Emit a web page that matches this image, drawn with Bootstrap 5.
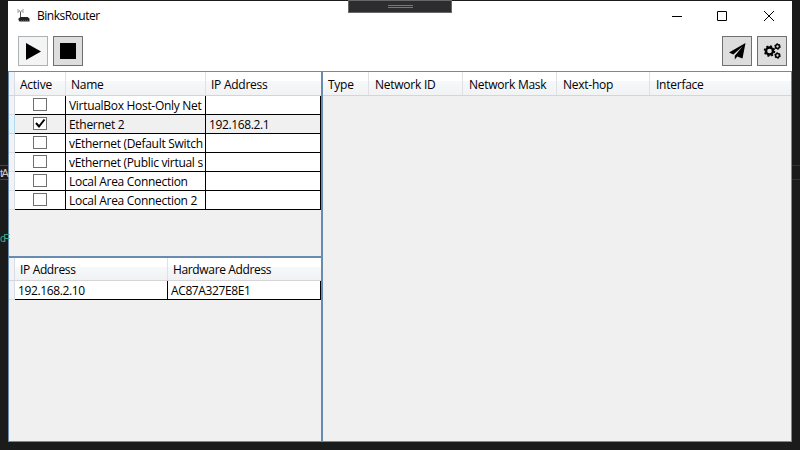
<!DOCTYPE html>
<html lang="en">
<head>
<meta charset="utf-8">
<title>BinksRouter</title>
<link href="https://cdn.jsdelivr.net/npm/bootstrap@5.3.0/dist/css/bootstrap.min.css" rel="stylesheet">
<style>
body{width:800px;height:450px;background:#1b1b1c;font-family:"Open Sans","Noto Sans",sans-serif;font-size:12px;line-height:18px;color:#000;letter-spacing:-.25px;padding:1px 8px 8px}
.win{width:784px;height:441px;background:#fff}
.titlebar{height:30px;padding:0 17px 0 9px}
.apptitle{margin-left:6px;letter-spacing:-.5px}
.tools{height:40px;padding:5px 5px 0 10px;gap:5px}
.tool{width:30px;height:30px;border:1px solid #707070;border-radius:0;background:#ddd;padding:0}
.tool.on{background:#f4f4f4;border-color:#adb2b5}
.panes{height:371px;border:1px solid #688caf}
.leftpane{width:312px}
.rightpane{border-left:2px solid #688caf}
.upper{height:184px}
.lower{border-top:2px solid #688caf}
.pane{background:#f0f0f0}
.heads{height:24px;background:linear-gradient(#fff 0%,#fff 40%,#f7f8fa 41%,#f1f2f4 100%);border-bottom:1px solid #d5d5d5}
.lower .heads{height:23px}
.hd{border-right:1px solid #dfe1e4;padding:4px 0 0 5px;white-space:nowrap}
.lower .hd{padding-top:3px;letter-spacing:-.35px}
.rightpane .hd{padding-left:6px}
.rightpane .hd:first-child{padding-left:5px}
.hd:last-child{border-right:0}
.edge{width:6px;background:#f0f4f9;border-right:1px solid #d9dde3}
.line{height:19px}
.line .edge{border-bottom:1px solid #dadfe5}
.line.sel .edge{background:#e4f3fb;border-color:#b3dbee}
.cell{background:#fff;border-right:1px solid #000;border-bottom:1px solid #000;padding:1px 0 0 3px;line-height:17px;letter-spacing:-.38px;overflow:hidden;white-space:nowrap}
.lower .cell{line-height:18px}
.clip{width:134px;overflow:hidden;letter-spacing:-.3px}
.sel .cell{background:#f0f0f0}
.w51{width:51px}.w140{width:140px}.w115{width:115px}.w153{width:153px}
.box{width:14px;height:13px;border:1px solid #707070;background:#fff;margin:2px 0 0 18px}
.grip{position:absolute;left:348px;top:0;width:104px;height:13px;background:#2d2d30;border:1px solid #686868}
.grip div{width:25px;height:3px;border:solid #77777a;border-width:1px 0;margin:4px auto 0}
.behind{position:absolute;left:0;width:8px;white-space:nowrap;font:11px/14px "Liberation Sans",sans-serif;letter-spacing:-1.5px}
.b1{top:165px;height:15px;color:#ccc;border:solid #454545;border-width:1px 0}
.b2{top:231px;color:#3fa78b;letter-spacing:-2.2px}
.b3{left:792px;top:165px;height:15px;border:solid #333;border-width:1px 0}
svg{display:block}
</style>
<script src="https://cdn.jsdelivr.net/npm/bootstrap@5.3.0/dist/js/bootstrap.bundle.min.js"></script>
</head>
<body class="m-0 overflow-hidden">
<div class="behind b1">tA</div><div class="behind b2">cF</div><div class="behind b3"></div>
<div class="win d-flex flex-column">
  <div class="titlebar d-flex align-items-center">
    <svg width="14" height="14" viewBox="0 0 14 14"><path d="M3.500 2.500v7" stroke="#555" fill="none"/><path d="M1 0v4M6 0v4M2.300 1v2M4.800 1v2" stroke="#888" stroke-width=".8"/><path d="M3.500 8h7l2 1.500v3h-10L1.500 11V9.500z" fill="#222"/><path d="M4 11.500h7" stroke="#777" stroke-width=".6" stroke-dasharray="1 1"/></svg>
    <span class="apptitle">BinksRouter</span>
    <svg class="ms-auto" width="104" height="12" viewBox="0 0 104 12" fill="none" stroke="#000"><path d="M1 6.500h10"/><path d="M46.500 1.500h9v9h-9z"/><path d="M93 1l10 10M103 1L93 11"/></svg>
  </div>
  <div class="tools d-flex">
    <button class="tool on btn" aria-label="Start"><svg width="28" height="28"><path d="M7 6l15 8.500L7 23z"/></svg></button>
    <button class="tool btn" aria-label="Stop"><svg width="28" height="28"><path d="M6 6h16v16H6z"/></svg></button>
    <button class="tool btn ms-auto" aria-label="Send"><svg width="28" height="28"><path d="M22.500 6L6 15.500l4.300 2.100L19.500 9.500l-7.700 9.200V22.500l2.500-3 5.200 2z"/></svg></button>
    <button class="tool btn" aria-label="Settings"><svg width="28" height="28" fill="none" stroke="#000"><circle cx="11.500" cy="14" r="3.500" stroke-width="2.400"/><circle cx="11.500" cy="14" r="5" stroke-width="1.500" stroke-dasharray="2 1.927"/><circle cx="19.500" cy="9.500" r="1.900" stroke-width="1.500"/><circle cx="19.500" cy="9.500" r="2.900" stroke-width=".9" stroke-dasharray="1.500 1.537"/><circle cx="19.500" cy="18.500" r="1.900" stroke-width="1.500"/><circle cx="19.500" cy="18.500" r="2.900" stroke-width=".9" stroke-dasharray="1.500 1.537"/></svg></button>
  </div>
  <div class="panes d-flex">
    <div class="leftpane d-flex flex-column">
      <div class="pane upper">
        <div class="heads d-flex"><div class="edge"></div><div class="hd w51">Active</div><div class="hd w140">Name</div><div class="hd w115">IP Address</div></div>
        <div class="line d-flex"><div class="edge"></div><div class="cell p-0 w51"><div class="box"></div></div><div class="cell w140"><div class="clip">VirtualBox Host-Only Net</div></div><div class="cell w115"></div></div>
        <div class="line sel d-flex"><div class="edge"></div><div class="cell p-0 w51"><div class="box"><svg width="12" height="11" fill="none" stroke="#000" stroke-width="2"><path d="M2 5l3 3.500L10.500 1.500"/></svg></div></div><div class="cell w140"><div class="clip">Ethernet 2</div></div><div class="cell w115">192.168.2.1</div></div>
        <div class="line d-flex"><div class="edge"></div><div class="cell p-0 w51"><div class="box"></div></div><div class="cell w140"><div class="clip">vEthernet (Default Switch</div></div><div class="cell w115"></div></div>
        <div class="line d-flex"><div class="edge"></div><div class="cell p-0 w51"><div class="box"></div></div><div class="cell w140"><div class="clip">vEthernet (Public virtual s</div></div><div class="cell w115"></div></div>
        <div class="line d-flex"><div class="edge"></div><div class="cell p-0 w51"><div class="box"></div></div><div class="cell w140"><div class="clip">Local Area Connection</div></div><div class="cell w115"></div></div>
        <div class="line d-flex"><div class="edge"></div><div class="cell p-0 w51"><div class="box"></div></div><div class="cell w140"><div class="clip">Local Area Connection 2</div></div><div class="cell w115"></div></div>
      </div>
      <div class="pane lower flex-grow-1">
        <div class="heads d-flex"><div class="edge"></div><div class="hd w153">IP Address</div><div class="hd w153">Hardware Address</div></div>
        <div class="line d-flex"><div class="edge"></div><div class="cell w153">192.168.2.10</div><div class="cell w153">AC87A327E8E1</div></div>
      </div>
    </div>
    <div class="pane rightpane flex-grow-1">
      <div class="heads d-flex"><div class="hd" style="width:46px">Type</div><div class="hd" style="width:94px">Network ID</div><div class="hd" style="width:94px">Network Mask</div><div class="hd" style="width:93px">Next-hop</div><div class="hd flex-grow-1">Interface</div></div>
    </div>
  </div>
</div>
<div class="grip"><div></div></div>
</body>
</html>
